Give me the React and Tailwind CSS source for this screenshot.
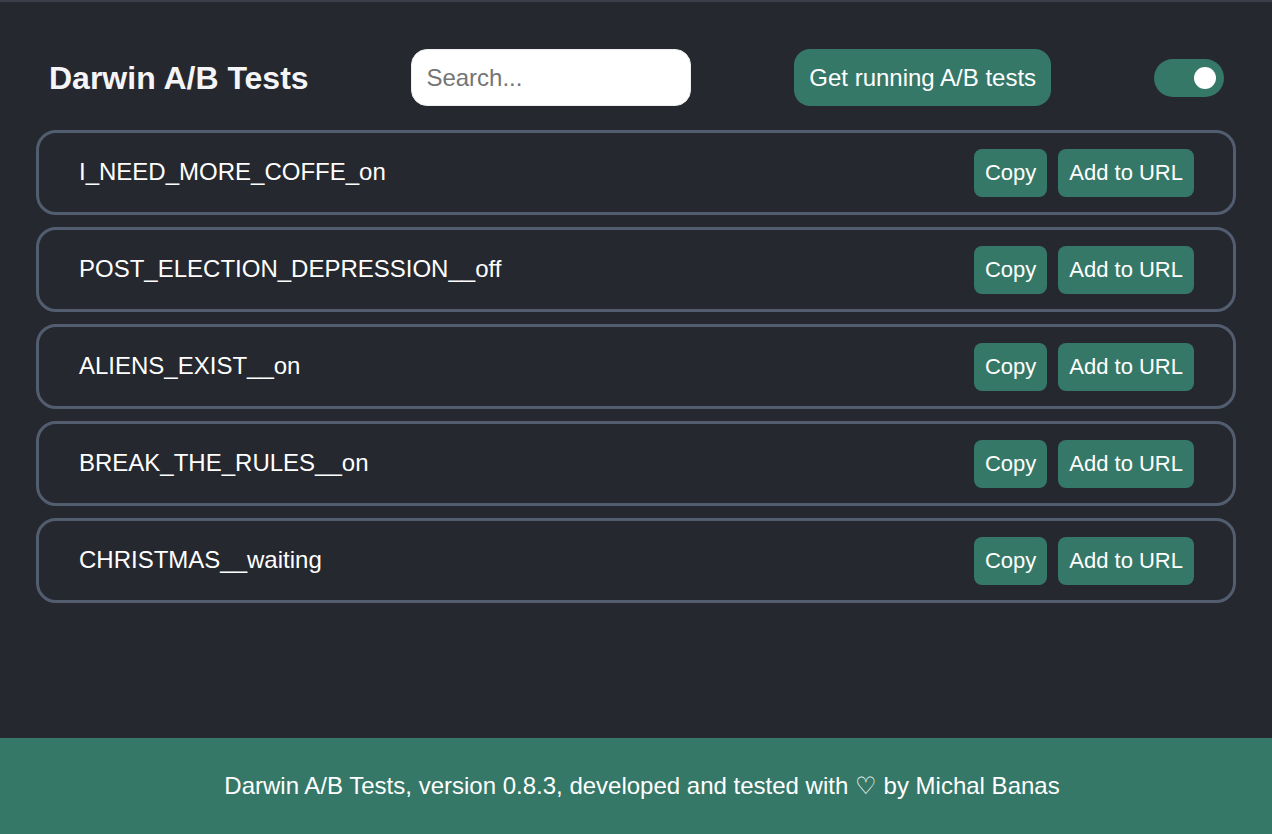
import React, { useState } from 'react';

const tests = [
  'I_NEED_MORE_COFFE_on',
  'POST_ELECTION_DEPRESSION__off',
  'ALIENS_EXIST__on',
  'BREAK_THE_RULES__on',
  'CHRISTMAS__waiting',
];

const TestRow = ({ name }) => (
  <div className="flex items-center justify-between h-[85px] pl-[40px] pr-[39px] border-[3px] border-[#525e70] rounded-[20px]">
    <span className="text-[24px] text-white -mt-[2px]">{name}</span>
    <div className="flex items-center gap-[11px]">
      <button className="h-[48px] px-[11px] rounded-[8px] bg-[#357868] text-white text-[22px]">Copy</button>
      <button className="h-[48px] px-[11px] rounded-[8px] bg-[#357868] text-white text-[22px]">Add to URL</button>
    </div>
  </div>
);

export default function App() {
  const [enabled, setEnabled] = useState(true);
  const [query, setQuery] = useState('');

  const filtered = tests.filter((t) => t.toLowerCase().includes(query.toLowerCase()));

  return (
    <div className="min-h-screen flex flex-col bg-[#262830] border-t-2 border-[#3c3f4a] font-['Liberation_Sans',Arial,sans-serif]">
      <main className="flex-1 w-[1200px] mx-auto">
        {/* Header */}
        <div className="flex items-center justify-between pl-[13px] pr-[12px] pt-[47px] pb-[24px]">
          <h1 className="text-[32px] font-bold text-[#f5f5f7]">Darwin A/B Tests</h1>
          <input
            value={query}
            onChange={(e) => setQuery(e.target.value)}
            placeholder="Search..."
            className="w-[280px] h-[57px] px-[14px] rounded-[16px] bg-white border border-[#eeeeee] text-[24px] text-black placeholder:text-[#757575] outline-none"
          />
          <button className="w-[257px] h-[57px] rounded-[16px] bg-[#357868] text-white text-[24px]">Get running A/B tests</button>
          <button
            onClick={() => setEnabled(!enabled)}
            className={`w-[70px] h-[38px] rounded-full flex items-center px-[8px] ${enabled ? 'bg-[#357868] justify-end' : 'bg-gray-500 justify-start'}`}
          >
            <span className="w-[22px] h-[22px] rounded-full bg-white"></span>
          </button>
        </div>

        {/* Test list */}
        <div className="flex flex-col gap-[12px]">
          {filtered.map((name) => (
            <TestRow key={name} name={name} />
          ))}
        </div>
      </main>

      <footer className="h-[96px] flex items-center justify-center pl-[12px] bg-[#357868] text-white text-[24px]">
        Darwin A/B Tests, version 0.8.3, developed and tested with ♡ by Michal Banas
      </footer>
    </div>
  );
}
